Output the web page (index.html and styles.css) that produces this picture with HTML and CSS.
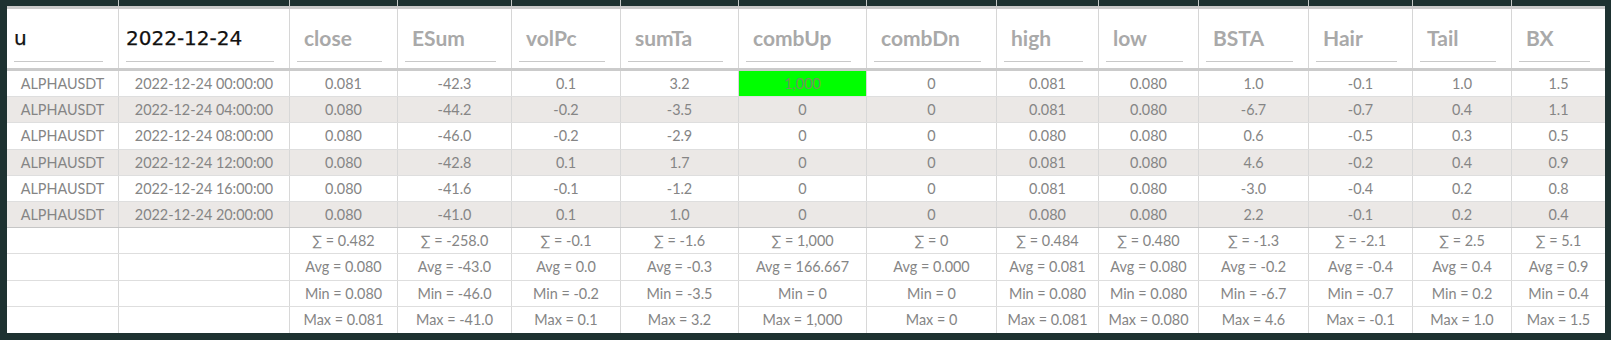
FILE: index.html
```html
<!DOCTYPE html>
<html>
<head>
<meta charset="utf-8">
<link rel="stylesheet" href="styles.css">
</head>
<body>
<div class="frame">
  <div class="strip row-grid">
    <div></div><div></div><div></div><div></div><div></div><div></div><div></div><div></div><div></div><div></div><div></div><div></div><div></div><div></div>
  </div>
  <div class="table">
    <div class="head row-grid">
      <div class="hc"><div class="lbl dark">u</div></div>
      <div class="hc"><div class="lbl dark">2022-12-24</div></div>
      <div class="hc"><div class="lbl">close</div></div>
      <div class="hc"><div class="lbl">ESum</div></div>
      <div class="hc"><div class="lbl">volPc</div></div>
      <div class="hc"><div class="lbl">sumTa</div></div>
      <div class="hc"><div class="lbl">combUp</div></div>
      <div class="hc"><div class="lbl">combDn</div></div>
      <div class="hc"><div class="lbl">high</div></div>
      <div class="hc"><div class="lbl">low</div></div>
      <div class="hc"><div class="lbl">BSTA</div></div>
      <div class="hc"><div class="lbl">Hair</div></div>
      <div class="hc"><div class="lbl">Tail</div></div>
      <div class="hc"><div class="lbl">BX</div></div>
    </div>

    <div class="row row-grid">
      <div>ALPHAUSDT</div><div>2022-12-24 00:00:00</div><div>0.081</div><div>-42.3</div><div>0.1</div><div>3.2</div><div class="hit">1,000</div><div>0</div><div>0.081</div><div>0.080</div><div>1.0</div><div>-0.1</div><div>1.0</div><div>1.5</div>
    </div>
    <div class="row row-grid alt">
      <div>ALPHAUSDT</div><div>2022-12-24 04:00:00</div><div>0.080</div><div>-44.2</div><div>-0.2</div><div>-3.5</div><div>0</div><div>0</div><div>0.081</div><div>0.080</div><div>-6.7</div><div>-0.7</div><div>0.4</div><div>1.1</div>
    </div>
    <div class="row row-grid">
      <div>ALPHAUSDT</div><div>2022-12-24 08:00:00</div><div>0.080</div><div>-46.0</div><div>-0.2</div><div>-2.9</div><div>0</div><div>0</div><div>0.080</div><div>0.080</div><div>0.6</div><div>-0.5</div><div>0.3</div><div>0.5</div>
    </div>
    <div class="row row-grid alt">
      <div>ALPHAUSDT</div><div>2022-12-24 12:00:00</div><div>0.080</div><div>-42.8</div><div>0.1</div><div>1.7</div><div>0</div><div>0</div><div>0.081</div><div>0.080</div><div>4.6</div><div>-0.2</div><div>0.4</div><div>0.9</div>
    </div>
    <div class="row row-grid">
      <div>ALPHAUSDT</div><div>2022-12-24 16:00:00</div><div>0.080</div><div>-41.6</div><div>-0.1</div><div>-1.2</div><div>0</div><div>0</div><div>0.081</div><div>0.080</div><div>-3.0</div><div>-0.4</div><div>0.2</div><div>0.8</div>
    </div>
    <div class="row row-grid alt last">
      <div>ALPHAUSDT</div><div>2022-12-24 20:00:00</div><div>0.080</div><div>-41.0</div><div>0.1</div><div>1.0</div><div>0</div><div>0</div><div>0.080</div><div>0.080</div><div>2.2</div><div>-0.1</div><div>0.2</div><div>0.4</div>
    </div>

    <div class="row row-grid foot">
      <div></div><div></div><div>∑ = 0.482</div><div>∑ = -258.0</div><div>∑ = -0.1</div><div>∑ = -1.6</div><div>∑ = 1,000</div><div>∑ = 0</div><div>∑ = 0.484</div><div>∑ = 0.480</div><div>∑ = -1.3</div><div>∑ = -2.1</div><div>∑ = 2.5</div><div>∑ = 5.1</div>
    </div>
    <div class="row row-grid foot">
      <div></div><div></div><div>Avg = 0.080</div><div>Avg = -43.0</div><div>Avg = 0.0</div><div>Avg = -0.3</div><div>Avg = 166.667</div><div>Avg = 0.000</div><div>Avg = 0.081</div><div>Avg = 0.080</div><div>Avg = -0.2</div><div>Avg = -0.4</div><div>Avg = 0.4</div><div>Avg = 0.9</div>
    </div>
    <div class="row row-grid foot">
      <div></div><div></div><div>Min = 0.080</div><div>Min = -46.0</div><div>Min = -0.2</div><div>Min = -3.5</div><div>Min = 0</div><div>Min = 0</div><div>Min = 0.080</div><div>Min = 0.080</div><div>Min = -6.7</div><div>Min = -0.7</div><div>Min = 0.2</div><div>Min = 0.4</div>
    </div>
    <div class="row row-grid foot endrow">
      <div></div><div></div><div>Max = 0.081</div><div>Max = -41.0</div><div>Max = 0.1</div><div>Max = 3.2</div><div>Max = 1,000</div><div>Max = 0</div><div>Max = 0.081</div><div>Max = 0.080</div><div>Max = 4.6</div><div>Max = -0.1</div><div>Max = 1.0</div><div>Max = 1.5</div>
    </div>
  </div>
</div>
</body>
</html>
```
FILE: styles.css
```css
html, body {
  margin: 0;
  padding: 0;
  background: #1e3231;
}
body {
  width: 1611px;
  height: 340px;
  overflow: hidden;
}
.frame {
  padding: 0 6px 7px 7px;
  font-family: "Lato", "Liberation Sans", sans-serif;
}
.row-grid {
  display: grid;
  grid-template-columns: 112px 171px 108px 114px 109px 118px 128px 130px 102px 100px 110px 104px 99px 93px;
  width: 1598px;
}
.strip {
  height: 6px;
}
.strip > div {
  border-right: 1px solid #c2c7c6;
}
.strip > div:last-child {
  border-right: none;
}
.table {
  background: #fff;
  border-top: 3px solid #cbcbcb;
}
.head {
  height: 62px;
  border-bottom: 3px solid #cbcbcb;
  box-sizing: border-box;
}
.hc {
  border-right: 1px solid #d6d6d6;
  display: flex;
  flex-direction: column;
  justify-content: flex-end;
  padding: 0 15px 6px 7px;
  min-width: 0;
}
.hc:last-child {
  border-right: none;
}
.lbl {
  font-size: 21px;
  line-height: 28px;
  font-weight: 700;
  color: #a9a9a9;
  padding: 0 0 9px 7px;
  border-bottom: 1px solid #c9c9c9;
  white-space: nowrap;
  overflow: hidden;
}
.lbl.dark {
  color: #111;
  font-family: "DejaVu Sans", "Open Sans", sans-serif;
  font-weight: 400;
  font-size: 20px;
  padding-left: 0;
  -webkit-text-stroke: 0.25px #111;
}
.row {
  height: 26.2px;
  box-sizing: border-box;
  border-bottom: 1px solid #dedede;
  font-size: 14.4px;
  color: #858585;
}
.row > div {
  border-right: 1px solid #d8d8d8;
  display: flex;
  align-items: center;
  justify-content: center;
  white-space: nowrap;
}
.row > div:last-child {
  border-right: none;
}
.alt {
  background: #ebe8e6;
}
.last {
  border-bottom-color: #c6c6c6;
}
.endrow {
  border-bottom: none;
}
.hit {
  background: #00ff00;
  color: #72935f;
}
```
